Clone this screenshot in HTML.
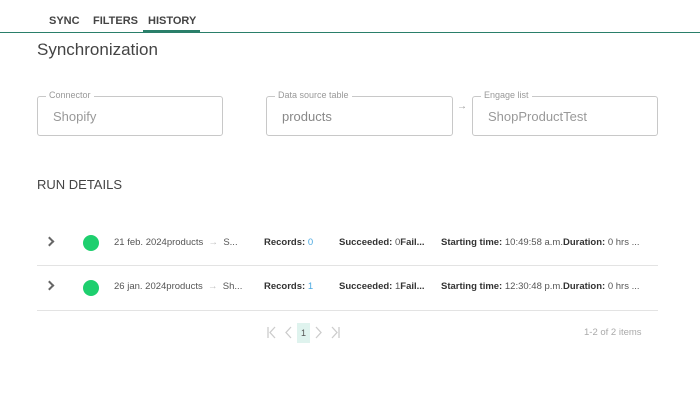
<!DOCTYPE html>
<html><head><style>
body{margin:0;width:700px;height:404px;background:#fff;font-family:"Liberation Sans",sans-serif;position:relative;overflow:hidden;color:#333}
.a{position:absolute;white-space:nowrap}
.tab{font-size:11px;font-weight:bold;color:#444;top:15px}
.box{position:absolute;top:96px;height:38px;border:1px solid #c8c8c8;border-radius:3px;box-sizing:border-box}
.lbl{position:absolute;top:-7px;left:8px;background:#fff;padding:0 3px;font-size:9px;color:#999}
.val{position:absolute;top:12px;left:15px;font-size:13px;color:#999}
.cell{font-size:9.5px;color:#555}
b{color:#333}
.sep{position:absolute;height:1px;background:#e3e3e3}
.dot{position:absolute;width:16px;height:16px;border-radius:50%;background:#1ecf6e}
.chev{position:absolute;width:5px;height:5px;border-right:2px solid #666;border-top:2px solid #666;transform:rotate(45deg)}
</style></head><body>
<div class="a tab" style="left:49px">SYNC</div>
<div class="a tab" style="left:93px">FILTERS</div>
<div class="a tab" style="left:148px">HISTORY</div>
<div class="a" style="left:0;top:32px;width:700px;height:1px;background:#2a7f6a"></div>
<div class="a" style="left:143px;top:30px;width:57px;height:2px;background:#2a7f6a"></div>
<div class="a" style="left:37px;top:40px;font-size:17px;color:#444">Synchronization</div>
<div class="box" style="left:37px;width:186px;height:40px"><span class="lbl">Connector</span><span class="val">Shopify</span></div>
<div class="box" style="left:266px;width:187px;height:40px"><span class="lbl">Data source table</span><span class="val" style="color:#888">products</span></div>
<div class="a" style="left:457px;top:101px;font-size:10px;color:#999">→</div>
<div class="box" style="left:472px;width:186px;height:40px"><span class="lbl">Engage list</span><span class="val">ShopProductTest</span></div>
<div class="a" style="left:37px;top:177px;font-size:13px;color:#444">RUN DETAILS</div>

<div class="chev" style="left:46px;top:238px"></div>
<div class="dot" style="left:83px;top:235px"></div>
<div class="a cell" style="left:114px;top:237px">21 feb. 2024products <span style="color:#bbb">&nbsp;→&nbsp;</span> S...</div>
<div class="a cell" style="left:264px;top:237px"><b>Records:</b> <span style="color:#4aa8e0">0</span></div>
<div class="a cell" style="left:339px;top:237px"><b>Succeeded:</b> 0<b>Fail...</b></div>
<div class="a cell" style="left:441px;top:237px"><b>Starting time:</b> 10:49:58 a.m.<b>Duration:</b> 0 hrs ...</div>
<div class="sep" style="left:37px;top:265px;width:621px"></div>

<div class="chev" style="left:46px;top:282px"></div>
<div class="dot" style="left:83px;top:280px"></div>
<div class="a cell" style="left:114px;top:281px">26 jan. 2024products <span style="color:#bbb">&nbsp;→&nbsp;</span> Sh...</div>
<div class="a cell" style="left:264px;top:281px"><b>Records:</b> <span style="color:#4aa8e0">1</span></div>
<div class="a cell" style="left:339px;top:281px"><b>Succeeded:</b> 1<b>Fail...</b></div>
<div class="a cell" style="left:441px;top:281px"><b>Starting time:</b> 12:30:48 p.m.<b>Duration:</b> 0 hrs ...</div>
<div class="sep" style="left:37px;top:310px;width:621px"></div>

<svg class="a" style="left:264px;top:325px" width="80" height="16" fill="none" stroke="#ccc" stroke-width="1.3">
<path d="M4 2v11M11 2L6 7.5 11 13"/><path d="M27 2L22 7.5 27 13"/>
<path d="M52 2L57 7.5 52 13"/><path d="M68 2L73 7.5 68 13M75 2v11"/>
</svg>
<div class="a" style="left:297px;top:323px;width:13px;height:20px;background:#dff3ee;font-size:9px;color:#555;text-align:center;line-height:20px">1</div>
<div class="a" style="left:584px;top:327px;font-size:9.5px;color:#aaa">1-2 of 2 items</div>
</body></html>
